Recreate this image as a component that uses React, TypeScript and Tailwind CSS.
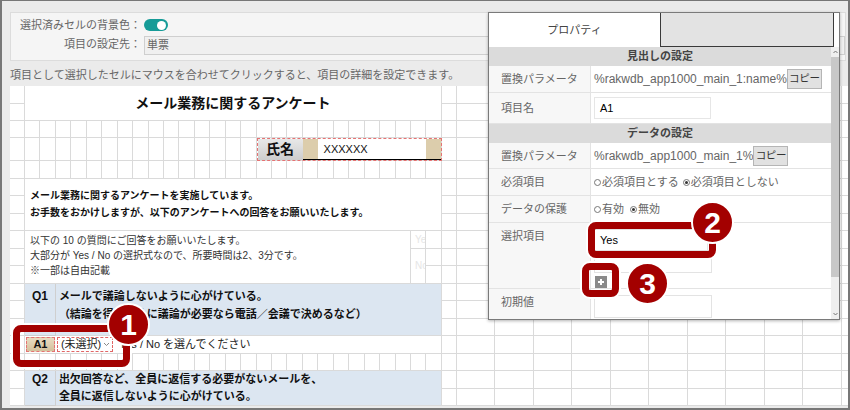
import React from "react";

const Radio = ({ on }: { on?: boolean }) => (
  <span className="inline-flex w-[7px] h-[7px] rounded-full border border-[#777] items-center justify-center mr-[1px] shrink-0">
    {on && <span className="w-[3px] h-[3px] rounded-full bg-[#333]" />}
  </span>
);

const Row = ({
  label,
  h,
  top,
  children,
}: {
  label: string;
  h: string;
  top?: boolean;
  children?: React.ReactNode;
}) => (
  <div className={`flex border-b border-[#e3e3e3] shrink-0 ${h}`}>
    <div
      className={`w-[102px] shrink-0 bg-[#f7f7f7] border-r border-[#e3e3e3] pl-[12px] text-[11px] leading-[14px] text-[#666] flex ${
        top ? "items-start pt-[6px]" : "items-center"
      }`}
    >
      {label}
    </div>
    <div className={`flex-1 flex pl-[3px] ${top ? "flex-col items-start pt-[6px]" : "items-center"}`}>
      {children}
    </div>
  </div>
);

const Header = ({ children }: { children: React.ReactNode }) => (
  <div className="h-[19px] shrink-0 bg-[#dbdbdb] flex items-center justify-center text-[11px] font-bold text-[#444]">
    {children}
  </div>
);

const CopyButton = () => (
  <span className="w-[35px] h-[20px] shrink-0 bg-[#e1e1e1] border border-[#b5b5b5] flex items-center justify-center whitespace-nowrap text-[10.5px] tracking-[-0.3px] text-[#333]">
    コピー
  </span>
);

export default function App() {
  return (
    <div className="relative w-[850px] h-[410px] overflow-hidden bg-[#ebebeb] border-x-2 border-b-2 border-t border-[#777] font-['Liberation_Sans','Noto_Sans_CJK_JP',sans-serif] flex flex-col">
      {/* settings box */}
      <div className="ml-[8px] mt-[11px] w-[836px] h-[49px] shrink-0 bg-[#f5f5f5] border border-[#dcdcdc] pt-[4px]">
        <div className="flex items-center h-[16px]">
          <div className="w-[130px] text-right text-[11px] text-[#666]">選択済みセルの背景色：</div>
          <div className="ml-[3px] w-[24px] h-[12px] rounded-full bg-[#169b97] flex items-center">
            <span className="ml-auto mr-[2px] w-[9px] h-[9px] rounded-full bg-white" />
          </div>
        </div>
        <div className="flex items-start mt-[3px]">
          <div className="w-[130px] text-right text-[11px] leading-[16px] text-[#666]">項目の設定先：</div>
          <div className="ml-[3px] flex-1 h-[19px] bg-[#f0f0f0] border border-[#cfcfcf] pl-[2px] text-[11px] leading-[17px] text-[#666]">
            単票
          </div>
        </div>
      </div>
      <div className="ml-[8px] h-[25px] shrink-0 pt-[3px] flex items-center text-[11px] text-[#666]">
        項目として選択したセルにマウスを合わせてクリックすると、項目の詳細を設定できます。
      </div>

      {/* sheet */}
      <div className="ml-[8px] grid">
        <div className="col-start-1 row-start-1 grid grid-cols-[15px_repeat(27,15.44px)_15px_repeat(11,38.5px)] grid-rows-[17.5px_17.5px_17px_23px_repeat(14,17.5px)] bg-white">
          {Array.from({ length: 18 * 40 }).map((_, i) => (
            <div key={i} className="border-r border-b border-[#dadada]" />
          ))}
        </div>
        <div className="col-start-1 row-start-1 grid grid-cols-[15px_repeat(27,15.44px)_15px_repeat(11,38.5px)] grid-rows-[17.5px_17.5px_17px_23px_repeat(14,17.5px)] text-[#111]">
          <div className="col-start-2 col-span-27 row-start-1 row-span-2 bg-white border-r border-b border-[#dadada] flex items-center justify-center text-[14px] font-bold">
            メール業務に関するアンケート
          </div>

          <div className="col-start-17 col-span-12 row-start-4 flex border border-dashed border-[#e57373]">
            <div className="w-[45px] shrink-0 bg-gradient-to-b from-[#e8e8e8] to-[#cdcdcd] flex items-center justify-center text-[14px] font-bold">
              氏名
            </div>
            <div className="flex-1 flex border-b border-black">
              <div className="w-[15px] bg-[#dccdac]" />
              <div className="flex-1 bg-white flex items-center pl-[6px] text-[11px]">XXXXXX</div>
              <div className="w-[15px] bg-[#dccdac]" />
            </div>
          </div>

          <div className="col-start-2 col-span-27 row-start-6 row-span-3 bg-white border-r border-b border-[#dadada] flex flex-col justify-center pl-[5px] text-[10px] leading-[17px] font-bold">
            <span>メール業務に関するアンケートを実施しています。</span>
            <span>お手数をおかけしますが、以下のアンケートへの回答をお願いいたします。</span>
          </div>

          <div className="col-start-2 col-span-25 row-start-9 row-span-3 bg-white border-r border-b border-[#dadada] pl-[5px] pt-[1.5px] text-[10px] leading-[15px] text-[#333]">
            <div>以下の 10 の質問にご回答をお願いいたします。</div>
            <div>大部分が Yes / No の選択式なので、所要時間は2、3分です。</div>
            <div>※一部は自由記載</div>
          </div>
          <div className="col-start-27 row-start-9 bg-white border-r border-b border-[#dadada] overflow-hidden whitespace-nowrap pl-[4px] flex items-center text-[10px] text-[#e6e6e6]">
            Yes
          </div>
          <div className="col-start-27 row-start-10 row-span-2 bg-white border-r border-b border-[#dadada] overflow-hidden whitespace-nowrap pl-[4px] flex items-center text-[10px] text-[#e6e6e6]">
            No
          </div>

          <div className="col-start-2 col-span-2 row-start-12 row-span-3 bg-[#dce6f1] border-r border-b border-[#cfcfcf] pt-[3px] text-center text-[12px] leading-[18px] font-bold">
            Q1
          </div>
          <div className="col-start-4 col-span-25 row-start-12 row-span-3 bg-[#dce6f1] border-r border-b border-[#dadada] pl-[3px] pt-[3px] text-[11px] leading-[18px] font-bold">
            メールで議論しないように心がけている。
            <br />
            （結論を得るために議論が必要なら電話／会議で決めるなど）
          </div>

          <div className="col-start-2 col-span-2 row-start-15 bg-white p-[1px] border-b border-[#dadada]">
            <div className="h-full bg-gradient-to-b from-[#e9dcc2] to-[#d4c19d] border border-dashed border-[#e57373] flex items-center justify-center text-[11px] font-bold">
              A1
            </div>
          </div>
          <div className="col-start-4 col-span-25 row-start-15 bg-white border-r border-b border-[#dadada] flex items-center pl-[1px]">
            <div className="w-[56px] h-[15px] border border-dashed border-[#e06666] flex items-center justify-between pl-[3px] pr-[2px] text-[11px] text-[#222]">
              <span>(未選択)</span>
              <svg width="7" height="5" viewBox="0 0 7 5">
                <polyline points="1,1 3.5,3.5 6,1" fill="none" stroke="#888" strokeWidth="1" />
              </svg>
            </div>
            <span className="ml-[6px] text-[11px] text-[#222]">Yes / No を選んでください</span>
          </div>

          <div className="col-start-2 col-span-2 row-start-17 row-span-2 bg-[#dce6f1] border-r border-b border-[#cfcfcf] text-center text-[12px] leading-[17px] font-bold">
            Q2
          </div>
          <div className="col-start-4 col-span-25 row-start-17 row-span-2 bg-[#dce6f1] border-r border-b border-[#dadada] pl-[3px] text-[11px] leading-[17px] font-bold">
            出欠回答など、全員に返信する必要がないメールを、
            <br />
            全員に返信しないように心がけている。
          </div>
        </div>
      </div>

      {/* property panel */}
      <div className="absolute left-[486px] top-[11px] w-[352px] h-[308px] bg-white border border-[#7a7a7a] shadow-[0_1px_3px_rgba(0,0,0,0.3)] flex flex-col">
        <div className="flex h-[34px] shrink-0">
          <div className="w-[171px] flex items-center justify-center text-[11px] text-[#444]">プロパティ</div>
          <div className="w-[174px] bg-[#e3e3e3] border-l border-b border-r border-[#3a3a3a]" />
        </div>
        <div className="flex flex-1 min-h-0">
          <div className="flex-1 flex flex-col overflow-hidden">
            <Header>見出しの設定</Header>
            <Row label="置換パラメータ" h="h-[27px]">
              <span className="text-[12px] text-[#666] whitespace-nowrap">%rakwdb_app1000_main_1:name%</span>
              <CopyButton />
            </Row>
            <Row label="項目名" h="h-[31px]">
              <div className="w-[117px] h-[22px] border border-[#e6e6e6] pl-[5px] flex items-center text-[11px] text-black">
                A1
              </div>
            </Row>
            <Header>データの設定</Header>
            <Row label="置換パラメータ" h="h-[26px]">
              <span className="text-[12px] text-[#666] whitespace-nowrap">%rakwdb_app1000_main_1%</span>
              <CopyButton />
            </Row>
            <Row label="必須項目" h="h-[27px]">
              <div className="flex items-center text-[11px] text-[#666]">
                <Radio />
                <span>必須項目とする</span>
                <span className="ml-[4px] flex items-center">
                  <Radio on />
                  <span>必須項目としない</span>
                </span>
              </div>
            </Row>
            <Row label="データの保護" h="h-[27px]">
              <div className="flex items-center text-[11px] text-[#666]">
                <Radio />
                <span>有効</span>
                <span className="ml-[6px] flex items-center">
                  <Radio on />
                  <span>無効</span>
                </span>
              </div>
            </Row>
            <Row label="選択項目" h="h-[66px]" top>
              <div className="w-[114px] h-[22px] border border-[#e3e3e3] pl-[5px] flex items-center text-[11px] text-black">
                Yes
              </div>
              <div className="mt-[4px] w-[118px] h-[18px] border border-[#e3e3e3]" />
              <div className="mt-[3px] ml-[1px] w-[12px] h-[12px] bg-[#8a8a8a] flex items-center justify-center">
                <svg width="8" height="8" viewBox="0 0 8 8">
                  <path d="M4 1v6M1 4h6" stroke="#fff" strokeWidth="2" />
                </svg>
              </div>
            </Row>
            <Row label="初期値" h="h-[40px]" top>
              <div className="w-[118px] h-[23px] border border-[#e3e3e3]" />
            </Row>
          </div>
          <div className="w-[8px] shrink-0 bg-[#efefef] flex flex-col items-center">
            <div className="h-[10px] flex items-center justify-center">
              <svg width="5" height="4" viewBox="0 0 5 4">
                <polyline points="0.5,3 2.5,1 4.5,3" fill="none" stroke="#777" strokeWidth="1" />
              </svg>
            </div>
            <div className="h-[220px] w-full bg-[#c8c8c8]" />
            <div className="flex-1" />
            <div className="h-[10px] flex items-center justify-center">
              <svg width="5" height="4" viewBox="0 0 5 4">
                <polyline points="0.5,1 2.5,3 4.5,1" fill="none" stroke="#777" strokeWidth="1" />
              </svg>
            </div>
          </div>
        </div>
      </div>

      {/* annotations */}
      <div className="absolute left-[11px] top-[324px] w-[117px] h-[42px] border-[7px] border-[#a30000] rounded-[8px] shadow-[0_0_0_2px_#fff]" />
      <div className="absolute left-[586px] top-[221px] w-[128px] h-[36px] border-[7px] border-[#a30000] rounded-[8px] shadow-[0_0_0_2px_#fff]" />
      <div className="absolute left-[580px] top-[262px] w-[37px] h-[34px] border-[7px] border-[#a30000] rounded-[8px] shadow-[0_0_0_2px_#fff]" />
      <div className="absolute left-[105px] top-[302px] w-[43px] h-[43px] rounded-full bg-[#a30000] border-2 border-white flex items-center justify-center text-white text-[30px] font-bold leading-none">
        1
      </div>
      <div className="absolute left-[689px] top-[200px] w-[43px] h-[43px] rounded-full bg-[#a30000] border-2 border-white flex items-center justify-center text-white text-[30px] font-bold leading-none">
        2
      </div>
      <div className="absolute left-[624px] top-[261px] w-[43px] h-[43px] rounded-full bg-[#a30000] border-2 border-white flex items-center justify-center text-white text-[30px] font-bold leading-none">
        3
      </div>
    </div>
  );
}
